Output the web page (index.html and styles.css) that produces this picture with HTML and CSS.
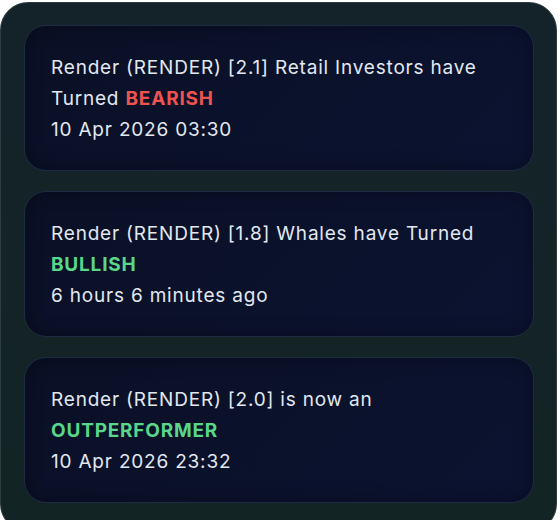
FILE: index.html
```html
<!DOCTYPE html>
<html lang="en">
<head>
    <meta charset="UTF-8">
    <meta name="viewport" content="width=device-width, initial-scale=1.0">
    <title>Signals</title>
    <link rel="stylesheet" href="styles.css">
</head>
<body>

    <div class="panel">
        <div class="signal-card">
            <p>Render (RENDER) [2.1] Retail Investors have Turned <span class="bearish">BEARISH</span></p>
            <p class="time">10 Apr 2026 03:30</p>
        </div>

        <div class="signal-card">
            <p>Render (RENDER) [1.8] Whales have Turned <span class="bullish">BULLISH</span></p>
            <p class="time">6 hours 6 minutes ago</p>
        </div>

        <div class="signal-card">
            <p>Render (RENDER) [2.0] is now an <span class="bullish">OUTPERFORMER</span></p>
            <p class="time">10 Apr 2026 23:32</p>
        </div>
    </div>

</body>
</html>
```

FILE: styles.css
```css
* {
    box-sizing: border-box;
}
body {
    margin: 0;
    background: #ffffff;
    font-family: Inter, "Noto Sans", sans-serif;
}
.panel {
    width: 557px;
    height: 530px;
    margin-top: 2px;
    padding: 22px 22px;
    border: 1px solid #2a3d42;
    border-radius: 28px;
    background: linear-gradient(180deg, #14232a 0%, #132424 100%);
    display: flex;
    flex-direction: column;
    gap: 20px;
}
.signal-card {
    height: 146px;
    margin-left: 1px;
    padding: 26px 26px;
    border: 1px solid #1d2b45;
    border-radius: 22px;
    background: linear-gradient(135deg, #0a1025 0%, #0b1331 100%);
    box-shadow: inset 0 0 18px rgba(0, 0, 0, 0.35);
    color: #e2e8f0;
    font-size: 19px;
    line-height: 31px;
    letter-spacing: 0.8px;
}
.signal-card p {
    margin: 0;
}
.bearish {
    color: #ef5350;
    font-weight: 700;
}
.bullish {
    color: #5ad68a;
    font-weight: 700;
}
```
